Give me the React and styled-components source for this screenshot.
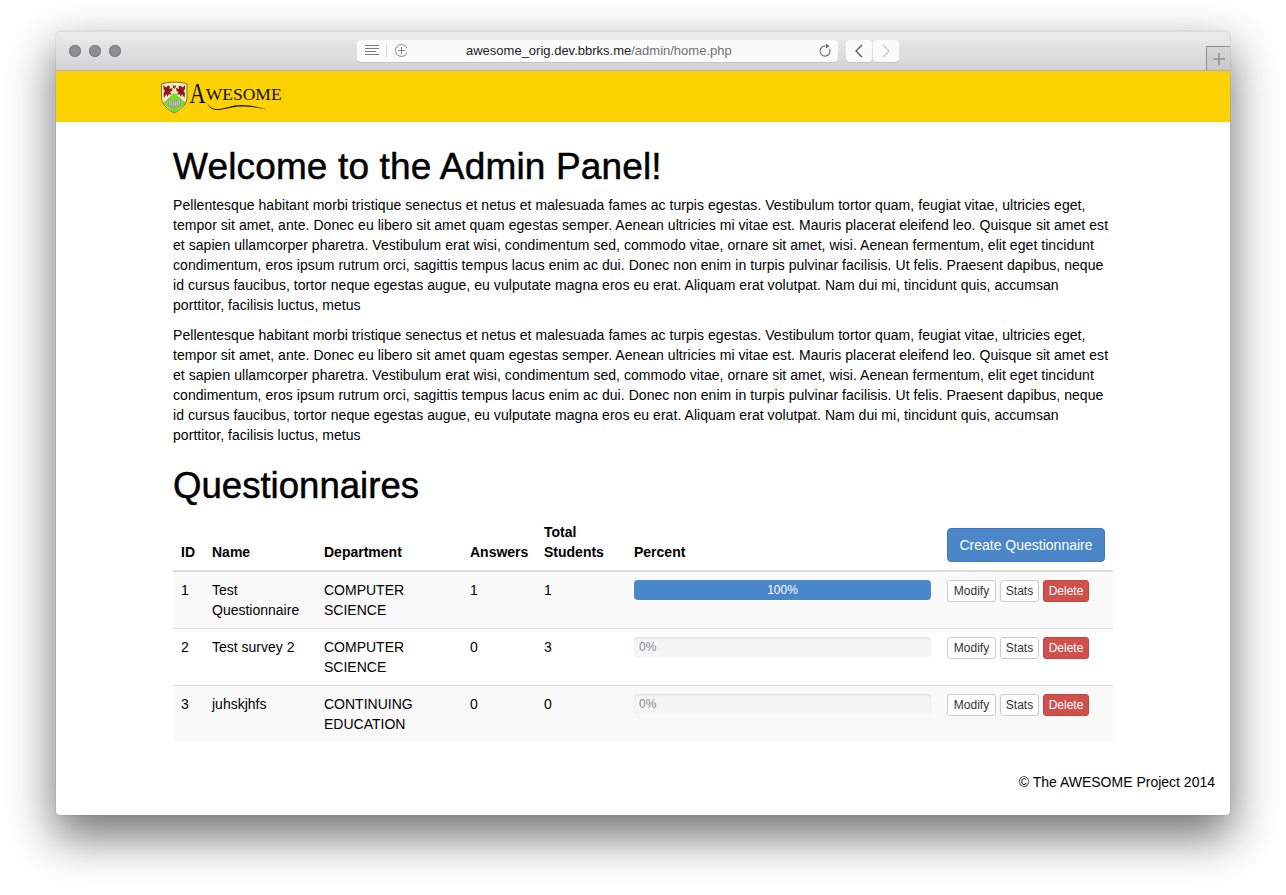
import React from "react";
import styled, { createGlobalStyle } from "styled-components";

const GlobalStyle = createGlobalStyle`
  html, body {
    margin: 0;
    padding: 0;
    background: #fff;
    height: 895px;
    overflow: hidden;
  }
  body {
    font-family: "Liberation Sans", Arial, sans-serif;
    font-size: 14px;
    line-height: 20px;
    color: #000;
  }
`;

const LOREM =
  "Pellentesque habitant morbi tristique senectus et netus et malesuada fames ac turpis egestas. Vestibulum tortor quam, feugiat vitae, ultricies eget, tempor sit amet, ante. Donec eu libero sit amet quam egestas semper. Aenean ultricies mi vitae est. Mauris placerat eleifend leo. Quisque sit amet est et sapien ullamcorper pharetra. Vestibulum erat wisi, condimentum sed, commodo vitae, ornare sit amet, wisi. Aenean fermentum, elit eget tincidunt condimentum, eros ipsum rutrum orci, sagittis tempus lacus enim ac dui. Donec non enim in turpis pulvinar facilisis. Ut felis. Praesent dapibus, neque id cursus faucibus, tortor neque egestas augue, eu vulputate magna eros eu erat. Aliquam erat volutpat. Nam dui mi, tincidunt quis, accumsan porttitor, facilisis luctus, metus";

const rows = [
  { id: 1, name: "Test Questionnaire", dept: "COMPUTER SCIENCE", answers: 1, total: 1, percent: 100 },
  { id: 2, name: "Test survey 2", dept: "COMPUTER SCIENCE", answers: 0, total: 3, percent: 0 },
  { id: 3, name: "juhskjhfs", dept: "CONTINUING EDUCATION", answers: 0, total: 0, percent: 0 },
];

const Logo = () => (
  <LogoSvg width="122" height="34" viewBox="0 0 122 34">
    <path d="M0.500 3 C8 0.500 19 0.500 26 3 L26 16 C26 24 19 29 13.300 32 C7.500 29 0.500 24 0.500 16 Z" fill="#f4efbe" stroke="#77704a" strokeWidth="1" />
    <path d="M2.500 4 L5 6.500 L7 4.500 L9 5.500 L8.500 8 L11.500 7 L11 10 L9 11 L11 14 L8 13 L6.500 16 L5.500 13 L3 17 L2.500 12 L4 10 L2.500 8 Z" fill="#8a1a1c" />
    <path d="M24 4 L21.500 6.500 L19.500 4.500 L17.500 5.500 L18 8 L15 7 L15.500 10 L17.500 11 L15.500 14 L18.500 13 L20 16 L21 13 L23.500 17 L24 12 L22.500 10 L24 8 Z" fill="#8a1a1c" />
    <path d="M11.500 3.500 L13.300 5.500 L15 3.500 L14.500 6.500 L13.300 8 L12 6.500 Z" fill="#8a1a1c" />
    <path d="M13.300 12.500 L24.500 22 L13.300 31.500 L2.500 22 Z" fill="#76e01c" stroke="#5c8a2c" strokeWidth="0.4" />
    <path d="M7.500 18.500 L13.300 20 L19.500 18.500 L19.500 24.500 L13.300 26 L7.500 24.500 Z" fill="#bfc4ba" stroke="#7a7f76" strokeWidth="0.5" />
    <path d="M13.300 20 L13.300 26 M9.500 19.500 L9.500 24.500 M11.500 20 L11.500 25 M15.500 20 L15.500 25 M17.500 19.500 L17.500 24.500" stroke="#7a7f76" strokeWidth="0.5" />
    <LogoBigLetter transform="translate(28.500 22) scale(0.74 1)">A</LogoBigLetter>
    <LogoLetters x="44.800" y="19">WESOME</LogoLetters>
    <path d="M46 22 C49 27 53 28.500 58 28 C66 27 72 24 80 24 C90 24 98 26.500 106 28.500 C96 26.500 88 25.500 80 25.500 C72 25.500 66 28 58 29 C52 29.500 48 27 46 22 Z" fill="#111" />
  </LogoSvg>
);

const App = () => (
  <>
    <GlobalStyle />
    <Window>
      <TitleBar>
        <Lights>
          <Light />
          <Light />
          <Light />
        </Lights>
        <UrlBar>
          <svg width="42" height="16" viewBox="0 0 42 16" fill="none">
            <path d="M0 2.500H14M0 5.500H14M0 8.500H11M0 11.500H14" stroke="#7d7d7d" />
            <path d="M21.500 1V14" stroke="#d4d4d4" />
            <circle cx="36.500" cy="7.500" r="6" stroke="#8a8a8a" />
            <path d="M36.500 4V11M33 7.500H40" stroke="#8a8a8a" />
          </svg>
          <UrlText>
            awesome_orig.dev.bbrks.me<UrlPath>/admin/home.php</UrlPath>
          </UrlText>
          <ReloadIcon width="14" height="16" viewBox="0 0 14 16" fill="none">
            <path d="M8.500 3.300 A5 5 0 1 0 11.600 6" stroke="#6f6f6f" strokeWidth="1.100" />
            <path d="M8 0.500 L11.500 3.200 L8 5.500 Z" fill="#6f6f6f" />
          </ReloadIcon>
        </UrlBar>
        <NavButtons>
          <NavButton>
            <svg width="10" height="14" viewBox="0 0 10 14" fill="none">
              <path d="M8 1 L2 7 L8 13" stroke="#555" strokeWidth="1.300" />
            </svg>
          </NavButton>
          <NavButton>
            <svg width="10" height="14" viewBox="0 0 10 14" fill="none">
              <path d="M2 1 L8 7 L2 13" stroke="#c9c9c9" strokeWidth="1.300" />
            </svg>
          </NavButton>
        </NavButtons>
        <NewTab>
          <svg width="12" height="12" viewBox="0 0 12 12" fill="none">
            <path d="M6 0V12M0 6H12" stroke="#777" />
          </svg>
        </NewTab>
      </TitleBar>

      <Navbar>
        <Logo />
      </Navbar>

      <Container>
        <Heading>Welcome to the Admin Panel!</Heading>
        <Paragraph>{LOREM}</Paragraph>
        <Paragraph>{LOREM}</Paragraph>
        <SubHeading>Questionnaires</SubHeading>
        <Table>
          <colgroup>
            <col width="31" />
            <col width="112" />
            <col width="146" />
            <col width="74" />
            <col width="90" />
            <col width="313" />
            <col width="174" />
          </colgroup>
          <thead>
            <tr>
              <Th>ID</Th>
              <Th>Name</Th>
              <Th>Department</Th>
              <Th>Answers</Th>
              <Th>Total Students</Th>
              <Th>Percent</Th>
              <Th>
                <CreateButton>Create Questionnaire</CreateButton>
              </Th>
            </tr>
          </thead>
          <tbody>
            {rows.map((row) => (
              <Row key={row.id}>
                <Td>{row.id}</Td>
                <Td>{row.name}</Td>
                <Td>{row.dept}</Td>
                <Td>{row.answers}</Td>
                <Td>{row.total}</Td>
                <Td>
                  <Progress>
                    <ProgressBar $percent={row.percent}>{row.percent}%</ProgressBar>
                  </Progress>
                </Td>
                <Td>
                  <Actions>
                    <SmallButton $width={49}>Modify</SmallButton>
                    <SmallButton $width={39}>Stats</SmallButton>
                    <SmallButton $width={46} $danger>Delete</SmallButton>
                  </Actions>
                </Td>
              </Row>
            ))}
          </tbody>
        </Table>
      </Container>

      <Footer>© The AWESOME Project 2014</Footer>
    </Window>
  </>
);

export default App;

const Window = styled.div`
  width: 1174px;
  height: 784px;
  margin: 31px 0 0 56px;
  background: #fff;
  border-radius: 5px 5px 4px 4px;
  box-shadow: 0 20px 46px 2px rgba(0, 0, 0, 0.55), 0 0 1px rgba(0, 0, 0, 0.4);
`;
const TitleBar = styled.div`
  height: 40px;
  box-sizing: border-box;
  display: flex;
  align-items: center;
  background: linear-gradient(#ececec, #d3d3d3);
  border-top: 1px solid #dcdcdc;
  border-bottom: 1px solid #b1b1b1;
  border-radius: 5px 5px 0 0;
  padding-left: 13px;
`;
const Lights = styled.div`
  display: flex;
  gap: 8px;
`;
const Light = styled.div`
  width: 12px;
  height: 12px;
  border-radius: 50%;
  background: #8e8e92;
  box-shadow: inset 0 0 0 1px #7f7f83;
`;
const UrlBar = styled.div`
  width: 481px;
  height: 22px;
  box-sizing: border-box;
  margin-left: 236px;
  padding: 0 6px 0 8px;
  display: flex;
  align-items: center;
  background: #fbfbfb;
  border-radius: 4px;
  box-shadow: 0 1px 0 #c4c4c4;
`;
const UrlText = styled.div`
  margin-left: 59px;
  font-size: 13px;
  line-height: 22px;
  white-space: nowrap;
  color: #222;
`;
const UrlPath = styled.span`
  color: #707070;
`;
const ReloadIcon = styled.svg`
  margin-left: auto;
`;
const NavButtons = styled.div`
  display: flex;
  gap: 1px;
  margin-left: 8px;
`;
const NavButton = styled.div`
  width: 26px;
  height: 22px;
  display: flex;
  align-items: center;
  justify-content: center;
  background: #fbfbfb;
  border-radius: 4px;
  box-shadow: 0 1px 0 #c4c4c4;
`;
const NewTab = styled.div`
  margin-left: auto;
  align-self: flex-end;
  width: 24px;
  height: 24px;
  box-sizing: border-box;
  display: flex;
  align-items: center;
  justify-content: center;
  border-top: 1px solid #8f8f8f;
  border-left: 1px solid #8f8f8f;
  background: linear-gradient(#d6d6d6, #c8c8c8);
`;
const Navbar = styled.div`
  height: 51px;
  background: #fbd200;
  padding: 10px 0 0 105px;
  box-sizing: border-box;
`;
const LogoSvg = styled.svg`
  display: block;
`;
const LogoBigLetter = styled.text`
  font-family: "Liberation Serif", serif;
  font-size: 30px;
  fill: #111;
`;
const LogoLetters = styled.text`
  font-family: "Liberation Serif", serif;
  font-size: 17.500px;
  fill: #111;
`;
const Container = styled.div`
  width: 940px;
  margin-left: 117px;
  padding-top: 25px;
`;
const Heading = styled.h1`
  margin: 0 0 8px;
  font-size: 37px;
  font-weight: 500;
  line-height: 40px;
  letter-spacing: 0.15px;
  -webkit-text-stroke: 0.5px #000;
  color: #000;
`;
const SubHeading = styled(Heading).attrs({ as: "h2" })`
  margin-top: 21px;
  font-size: 36.600px;
  letter-spacing: 0;
`;
const Paragraph = styled.p`
  margin: 0 0 10px;
  letter-spacing: 0.05px;
`;
const Table = styled.table`
  width: 940px;
  table-layout: fixed;
  border-collapse: collapse;
  border-spacing: 0;
`;
const Th = styled.th`
  padding: 8px;
  text-align: left;
  vertical-align: bottom;
  font-weight: 700;
  border-bottom: 2px solid #ddd;
`;
const Row = styled.tr`
  &:nth-child(odd) td {
    background: #f9f9f9;
  }
  & + & td {
    border-top: 1px solid #ddd;
  }
`;
const Td = styled.td`
  padding: 8px;
  vertical-align: top;
`;
const CreateButton = styled.button`
  display: block;
  width: 158px;
  height: 34px;
  padding: 6px 0;
  font: inherit;
  font-weight: 400;
  white-space: nowrap;
  color: #fff;
  background: #4a86c8;
  border: 1px solid #4079b8;
  border-radius: 4px;
`;
const Progress = styled.div`
  height: 20px;
  background: #f5f5f5;
  border-radius: 4px;
  overflow: hidden;
  box-shadow: inset 0 1px 2px rgba(0, 0, 0, 0.1);
`;
const ProgressBar = styled.div`
  width: ${(p) => (p.$percent > 0 ? `${p.$percent}%` : "auto")};
  height: 20px;
  font-size: 12px;
  line-height: 20px;
  text-align: ${(p) => (p.$percent > 0 ? "center" : "left")};
  padding-left: ${(p) => (p.$percent > 0 ? 0 : 5)}px;
  color: ${(p) => (p.$percent > 0 ? "#fff" : "#8a8a8a")};
  background: ${(p) => (p.$percent > 0 ? "#4a86c8" : "transparent")};
`;
const Actions = styled.div`
  display: flex;
  gap: 4px;
`;
const SmallButton = styled.button`
  width: ${(p) => p.$width}px;
  height: 22px;
  padding: 1px 0;
  font-family: inherit;
  font-size: 12px;
  line-height: 18px;
  border-radius: 3px;
  color: ${(p) => (p.$danger ? "#fff" : "#333")};
  background: ${(p) => (p.$danger ? "#d0504e" : "#fff")};
  border: 1px solid ${(p) => (p.$danger ? "#c5443f" : "#ccc")};
`;
const Footer = styled.div`
  margin-top: 30px;
  padding-right: 15px;
  text-align: right;
`;
